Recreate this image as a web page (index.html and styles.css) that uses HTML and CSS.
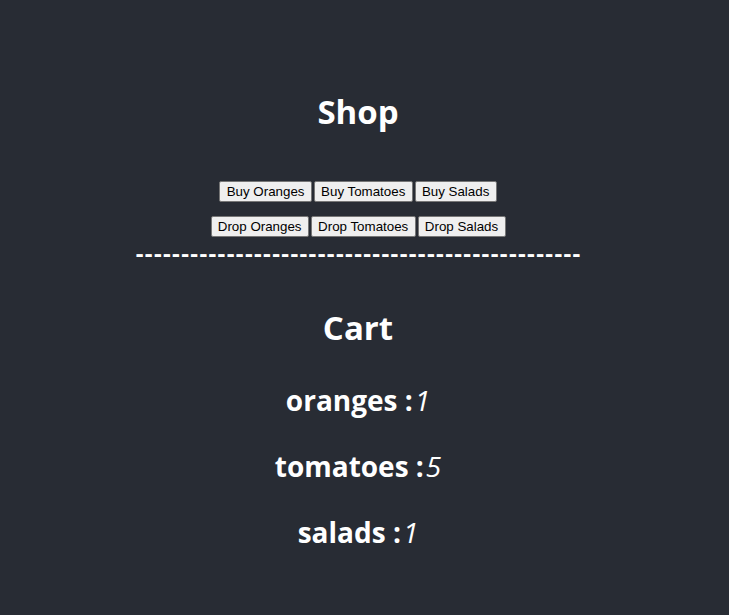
FILE: index.html
```html
<!DOCTYPE html>
<html lang="en">
<head>
<meta charset="utf-8">
<title>Shop</title>
<link rel="stylesheet" href="styles.css">
</head>
<body>
<main class="app">
  <h1 class="title shop-title">Shop</h1>
  <div class="btn-row buy-row">
    <button class="btn">Buy Oranges</button>
    <button class="btn">Buy Tomatoes</button>
    <button class="btn">Buy Salads</button>
  </div>
  <div class="btn-row drop-row">
    <button class="btn">Drop Oranges</button>
    <button class="btn">Drop Tomatoes</button>
    <button class="btn">Drop Salads</button>
  </div>
  <div class="divider">-------------------------------------------------</div>
  <h1 class="title cart-title">Cart</h1>
  <h2 class="item">oranges :<i class="qty">1</i></h2>
  <h2 class="item">tomatoes :<i class="qty">5</i></h2>
  <h2 class="item">salads :<i class="qty">1</i></h2>
</main>
</body>
</html>
```
FILE: styles.css
```css
html, body {
  margin: 0;
  padding: 0;
  background: #282c34;
}
body {
  width: 716px;
  height: 615px;
  overflow: hidden;
  color: #ffffff;
  font-family: "Open Sans", "Noto Sans", sans-serif;
}
.app {
  display: flex;
  flex-direction: column;
  align-items: center;
  text-align: center;
}
.title {
  margin: 0;
  font-size: 33px;
  font-weight: 700;
  line-height: 40px;
}
.shop-title {
  margin-top: 92px;
}
.btn-row {
  display: flex;
  gap: 2px;
}
.buy-row {
  margin-top: 49px;
}
.drop-row {
  margin-top: 14px;
}
.btn {
  font-family: "Liberation Sans", Arial, sans-serif;
  font-size: 13.333px;
  color: #000;
  background: #efefef;
  border: 1px solid #767676;
  border-radius: 2px;
  padding: 2px 6.3px;
  line-height: 15px;
  margin: 0;
}
.divider {
  margin-top: 4px;
  font-size: 24px;
  line-height: 24px;
  font-weight: 700;
  letter-spacing: 1.38px;
  padding-left: 1.38px;
}
.cart-title {
  margin-top: 43px;
}
.item {
  margin: 0;
  font-size: 28px;
  font-weight: 700;
  line-height: 32px;
}
.item:first-of-type {
  margin-top: 36px;
}
.item + .item {
  margin-top: 34px;
}
.qty {
  font-weight: 400;
  font-style: italic;
  margin-left: 2px;
}
```
